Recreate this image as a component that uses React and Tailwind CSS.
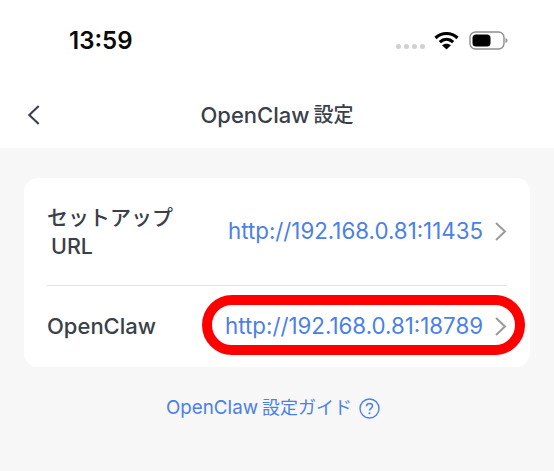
const FONT = '[font-family:Inter,"Noto_Sans_CJK_JP",sans-serif]';

function Wifi() {
  return (
    <svg width="25" height="19" viewBox="0 0 25 19" fill="none">
      <path d="M1.500 7C7.500 1 17.500 1 23.500 7" stroke="#000" strokeWidth="3.200" />
      <path d="M5.800 11.200C9.800 7.400 15.200 7.400 19.200 11.200" stroke="#000" strokeWidth="3.200" />
      <path d="M12.500 18.500L8 14.300C10.600 12.200 14.400 12.200 17 14.300Z" fill="#000" />
    </svg>
  );
}

function Battery() {
  return (
    <svg width="40" height="20" viewBox="0 0 40 20" fill="none">
      <rect x="1" y="2" width="34" height="17" rx="5.500" stroke="#8e8e8e" strokeWidth="1.400" />
      <rect x="3.500" y="4.500" width="18" height="12" rx="3.500" fill="#000" />
      <path d="M36.500 8v5c1.200-.4 2-1.400 2-2.500s-.8-2.100-2-2.500Z" fill="#8e8e8e" />
    </svg>
  );
}

function Chevron({ color = "#9a9a9a", w = 13, h = 21, sw = 2 }) {
  return (
    <svg width={w} height={h} viewBox="0 0 13 21" fill="none">
      <path d="M2 2l9 8.500-9 8.500" stroke={color} strokeWidth={sw} />
    </svg>
  );
}

export default function App() {
  return (
    <div className={`w-[554px] h-[471px] overflow-hidden bg-[#f7f7f7] ${FONT}`}>
      <div className="h-[148px] bg-white flex flex-col">
        <div className="h-[82px] flex items-start justify-between pl-[69px] pr-[45px] pt-[28px]">
          <span className="text-[24px] leading-[26px] font-semibold text-[#0a0a0a]">13:59</span>
          <div className="flex items-center mt-[2px]">
            <div className="flex gap-[3px] mt-[13px] mr-[9px]">
              <span className="w-[5px] h-[5px] rounded-full bg-[#d0d0d0]" />
              <span className="w-[5px] h-[5px] rounded-full bg-[#d0d0d0]" />
              <span className="w-[5px] h-[5px] rounded-full bg-[#d0d0d0]" />
              <span className="w-[5px] h-[5px] rounded-full bg-[#d0d0d0]" />
            </div>
            <Wifi />
            <div className="ml-[10px]"><Battery /></div>
          </div>
        </div>
        <div className="relative h-[66px] flex items-center justify-center pb-[1px]">
          <div className="absolute left-[27px] top-[22px] flex rotate-180">
            <Chevron color="#3a3f4a" w={14} h={22} sw={2} />
          </div>
          <span className="flex items-center gap-[4px] leading-[28px] font-medium text-[#3a3f4a]">
            <span className="text-[22px]">OpenClaw</span>
            <span className="text-[20px]">設定</span>
          </span>
        </div>
      </div>

      <div className="pt-[30px] px-[24px]">
        <div className="relative bg-white rounded-[14px] px-[23px]">
          <div className="h-[108px] flex items-center justify-between border-b border-[#e3e3e3]">
            <span className="leading-[28px] font-medium text-[#3a3f4a] w-[130px]">
              <span className="block text-[21px] whitespace-nowrap">セットアップ</span>
              <span className="block text-[21.500px] pl-[4px]">URL</span>
            </span>
            <div className="flex items-center gap-[11px] pb-[1px]">
              <span className="text-[22.300px] leading-[28px] text-[#4a80e8]">http://192.168.0.81:11435</span>
              <Chevron />
            </div>
          </div>
          <div className="h-[81px] flex items-center justify-between pb-[1px]">
            <span className="text-[22px] leading-[28px] font-medium text-[#3a3f4a]">OpenClaw</span>
            <div className="flex items-center gap-[11px]">
              <span className="text-[22.300px] leading-[28px] text-[#4a80e8]">http://192.168.0.81:18789</span>
              <Chevron />
            </div>
          </div>
          <div className="absolute left-[178px] top-[117px] w-[323px] h-[60px] rounded-[30px] border-[10px] border-[#fe0000]" />
        </div>
        <div className="mt-[28px] flex items-center justify-center gap-[7px] pr-[8px]">
          <span className="flex items-center gap-[4px] leading-[26px] text-[#4a80e8]">
            <span className="text-[18.800px]">OpenClaw</span>
            <span className="text-[18px]">設定ガイド</span>
          </span>
          <svg width="21" height="21" viewBox="0 0 21 21" fill="none">
            <circle cx="10.500" cy="10.500" r="9.500" stroke="#4a80e8" strokeWidth="1.400" />
            <path d="M7.500 8.300c0-1.800 1.300-2.900 3-2.900s3 1.100 3 2.700c0 2.300-3 2.300-3 4.500" stroke="#4a80e8" strokeWidth="1.500" />
            <circle cx="10.500" cy="15.300" r="1" fill="#4a80e8" />
          </svg>
        </div>
      </div>
    </div>
  );
}
